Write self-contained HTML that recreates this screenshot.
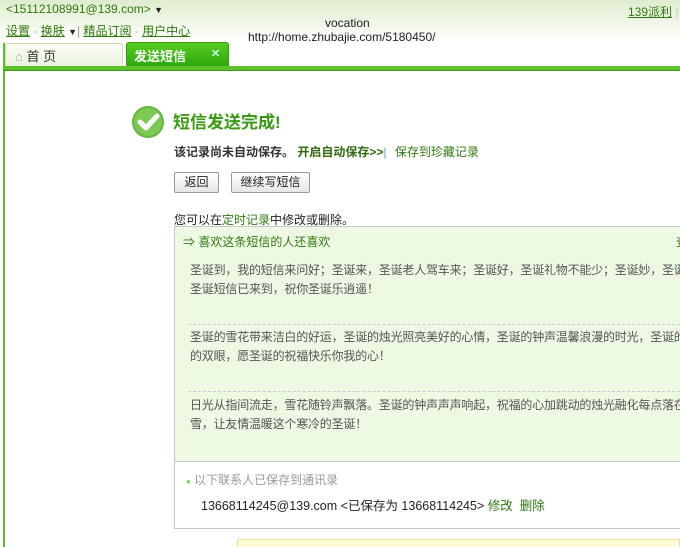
<!DOCTYPE html>
<html><head><meta charset="utf-8"><style>
*{margin:0;padding:0;box-sizing:border-box}
html,body{width:680px;height:547px;overflow:hidden}
body{background:#fff;font-family:"Liberation Sans","Noto Sans CJK SC",sans-serif;font-size:12px;color:#333}
#w{position:relative;width:680px;height:547px;overflow:hidden}
.a{position:absolute;white-space:nowrap}
.top{position:absolute;left:0;top:0;width:680px;height:42px;background:linear-gradient(#dfeccf,#fff)}
.g{color:#2f7a0d}
u{text-decoration:underline}
.btn{position:absolute;height:21px;border:1px solid #999;background:linear-gradient(#fff,#e6e6e6);font-size:12px;text-align:center;line-height:19px;color:#222;border-radius:2px}
.dash{position:absolute;left:188px;width:492px;border-top:1px dashed #ccc}
.t{color:#555;letter-spacing:-0.2px}
</style></head><body><div id="w">
<div class="top"></div>
<div class="a g" style="left:6px;top:2px;font-size:12px">&lt;15112108991@139.com&gt; <span style="color:#222;font-size:9px">▼</span></div>
<div class="a g" style="left:6px;top:22px;font-size:12px"><u>设置</u> <span style="color:#bbb">-</span> <u>换肤</u> <span style="color:#222;font-size:9px">▼</span><span style="color:#999">|</span> <u>精品订阅</u> <span style="color:#bbb">-</span> <u>用户中心</u></div>
<div class="a" style="left:325px;top:16px;font-size:12px;color:#222">vocation</div>
<div class="a" style="left:248px;top:30px;font-size:12px;color:#222">http://home.zhubajie.com/5180450/</div>
<div class="a g" style="left:628px;top:3px;font-size:12px"><u>139派利</u> <span style="color:#ccc">|</span></div>
<div class="a" style="left:3px;top:43px;width:2px;height:504px;background:#5cc12b"></div>
<div class="a" style="left:5px;top:43px;width:118px;height:24px;border:1px solid #c9dfb4;border-bottom:none;background:linear-gradient(#fbfdf6,#e9f3dc);border-radius:3px 3px 0 0"></div>
<div class="a" style="left:15px;top:46px;font-size:13px;color:#333"><span style="color:#aaa">⌂</span> 首 页</div>
<div class="a" style="left:126px;top:42px;width:103px;height:25px;background:linear-gradient(#56cc22,#2ea80c);border-radius:3px 3px 0 0;border:1px solid #3a9a12"></div>
<div class="a" style="left:134px;top:46px;font-size:13px;color:#fff;font-weight:bold">发送短信</div>
<div class="a" style="left:211px;top:47px;font-size:11px;color:#cfe;font-weight:bold">✕</div>
<div class="a" style="left:3px;top:66px;width:677px;height:5px;background:#5cc12b;border-bottom:1px solid #3d9a17"></div>
<svg class="a" style="left:131px;top:105px" width="34" height="34"><circle cx="17" cy="17" r="16" fill="#62b83a"/><circle cx="17" cy="17" r="14" fill="#7cc955"/><path d="M9 17l6 6 11-12" stroke="#fff" stroke-width="5" fill="none" stroke-linecap="round" stroke-linejoin="round"/></svg>
<div class="a" style="left:173px;top:108px;font-size:17px;color:#3a9a12;font-weight:bold">短信发送完成!</div>
<div class="a" style="left:174px;top:143px;font-size:12px;color:#333;font-weight:bold">该记录尚未自动保存。 <span style="color:#2f6a0d">开启自动保存&gt;&gt;</span><span style="color:#6a9bd3;font-weight:normal">|</span> <span class="g" style="font-weight:normal;margin-left:5px">保存到珍藏记录</span></div>
<div class="btn" style="left:174px;top:172px;width:45px">返回</div>
<div class="btn" style="left:231px;top:172px;width:79px">继续写短信</div>
<div class="a" style="left:174px;top:211px;color:#222">您可以在<span class="g">定时记录</span>中修改或删除。</div>
<div class="a" style="left:174px;top:226px;width:506px;height:236px;background:#eef9e4;border:1px solid #c8c8c8;border-right:none"></div>
<div class="a g" style="left:183px;top:233px">⇒ 喜欢这条短信的人还喜欢</div>
<div class="a g" style="left:676px;top:233px">查</div>
<div class="a t" style="left:190px;top:261px;line-height:19px">圣诞到，我的短信来问好；圣诞来，圣诞老人驾车来；圣诞好，圣诞礼物不能少；圣诞妙，圣诞气氛<br>圣诞短信已来到，祝你圣诞乐逍遥！</div>
<div class="dash" style="top:324px"></div>
<div class="a t" style="left:190px;top:328px;line-height:19px">圣诞的雪花带来洁白的好运，圣诞的烛光照亮美好的心情，圣诞的钟声温馨浪漫的时光，圣诞的烟花<br>的双眼，愿圣诞的祝福快乐你我的心！</div>
<div class="dash" style="top:391px"></div>
<div class="a t" style="left:190px;top:396px;line-height:19px">日光从指间流走，雪花随铃声飘落。圣诞的钟声声声响起，祝福的心加跳动的烛光融化每点落在你身<br>雪，让友情温暖这个寒冷的圣诞！</div>
<div class="a" style="left:174px;top:461px;width:506px;height:68px;border:1px solid #c8c8c8;border-right:none;background:#fff"></div>
<div class="a" style="left:186px;top:471px;color:#999"><span style="color:#7cc955;font-size:8px">●</span> 以下联系人已保存到通讯录</div>
<div class="a" style="left:201px;top:495px;color:#222;font-size:12.5px">13668114245@139.com &lt;已保存为 13668114245&gt; <span class="g">修改</span>&nbsp; <span class="g">删除</span></div>
<div class="a" style="left:237px;top:539px;width:443px;height:10px;background:#fefbd8;border:1px solid #e6e2a0"></div>
</div></body></html>
